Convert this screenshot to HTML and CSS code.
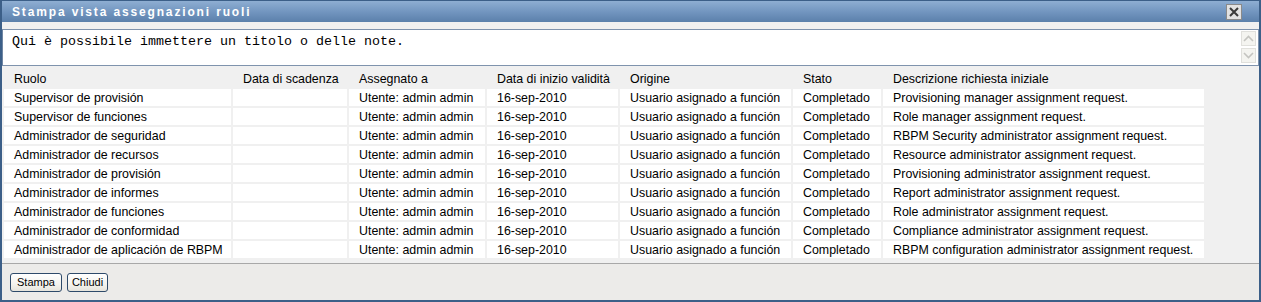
FILE: index.html
```html
<!DOCTYPE html>
<html lang="it">
<head>
<meta charset="utf-8">
<title>Stampa vista assegnazioni ruoli</title>
<link rel="stylesheet" href="styles.css">
</head>
<body>
<div class="dialog">
  <div class="titlebar">
    <span class="title">Stampa vista assegnazioni ruoli</span>
    <button class="close" type="button" aria-label="Chiudi">
      <svg width="10" height="10" viewBox="0 0 10 10"><path d="M1 1 L9 9 M9 1 L1 9" stroke="#3a3a3a" stroke-width="2" fill="none"/></svg>
    </button>
  </div>
  <div class="content">
    <div class="notes">
      <div class="notes-text">Qui è possibile immettere un titolo o delle note.</div>
      <div class="scrollbar">
        <span class="sbtn"><svg width="11" height="7" viewBox="0 0 11 7"><path d="M1 6 L5.5 1.5 L10 6" stroke="#c4c4c0" stroke-width="1.6" fill="none"/></svg></span>
        <span class="sbtn"><svg width="11" height="7" viewBox="0 0 11 7"><path d="M1 1 L5.5 5.5 L10 1" stroke="#c4c4c0" stroke-width="1.6" fill="none"/></svg></span>
      </div>
    </div>
    <table class="grid">
      <colgroup>
        <col class="c1"><col class="c2"><col class="c3"><col class="c4"><col class="c5"><col class="c6"><col class="c7">
      </colgroup>
      <thead>
        <tr><th>Ruolo</th><th>Data di scadenza</th><th>Assegnato a</th><th>Data di inizio validità</th><th>Origine</th><th>Stato</th><th>Descrizione richiesta iniziale</th></tr>
      </thead>
      <tbody>
        <tr><td>Supervisor de provisión</td><td></td><td>Utente: admin admin</td><td>16-sep-2010</td><td>Usuario asignado a función</td><td>Completado</td><td>Provisioning manager assignment request.</td></tr>
        <tr><td>Supervisor de funciones</td><td></td><td>Utente: admin admin</td><td>16-sep-2010</td><td>Usuario asignado a función</td><td>Completado</td><td>Role manager assignment request.</td></tr>
        <tr><td>Administrador de seguridad</td><td></td><td>Utente: admin admin</td><td>16-sep-2010</td><td>Usuario asignado a función</td><td>Completado</td><td>RBPM Security administrator assignment request.</td></tr>
        <tr><td>Administrador de recursos</td><td></td><td>Utente: admin admin</td><td>16-sep-2010</td><td>Usuario asignado a función</td><td>Completado</td><td>Resource administrator assignment request.</td></tr>
        <tr><td>Administrador de provisión</td><td></td><td>Utente: admin admin</td><td>16-sep-2010</td><td>Usuario asignado a función</td><td>Completado</td><td>Provisioning administrator assignment request.</td></tr>
        <tr><td>Administrador de informes</td><td></td><td>Utente: admin admin</td><td>16-sep-2010</td><td>Usuario asignado a función</td><td>Completado</td><td>Report administrator assignment request.</td></tr>
        <tr><td>Administrador de funciones</td><td></td><td>Utente: admin admin</td><td>16-sep-2010</td><td>Usuario asignado a función</td><td>Completado</td><td>Role administrator assignment request.</td></tr>
        <tr><td>Administrador de conformidad</td><td></td><td>Utente: admin admin</td><td>16-sep-2010</td><td>Usuario asignado a función</td><td>Completado</td><td>Compliance administrator assignment request.</td></tr>
        <tr><td>Administrador de aplicación de RBPM</td><td></td><td>Utente: admin admin</td><td>16-sep-2010</td><td>Usuario asignado a función</td><td>Completado</td><td>RBPM configuration administrator assignment request.</td></tr>
      </tbody>
    </table>
  </div>
  <div class="footer">
    <button class="btn btn-print" type="button">Stampa</button>
    <button class="btn btn-close" type="button">Chiudi</button>
  </div>
</div>
</body>
</html>
```
FILE: styles.css
```css
* { box-sizing: border-box; }
html, body { margin: 0; padding: 0; }
body {
  width: 1261px;
  height: 302px;
  overflow: hidden;
  font-family: "Liberation Sans", Arial, sans-serif;
  background: #ffffff;
}
.dialog {
  width: 1261px;
  height: 302px;
  border: 2px solid #3c5f88;
  border-top-width: 1px;
  background: #f0f0f0;
  display: flex;
  flex-direction: column;
}
.titlebar {
  height: 21px;
  flex: none;
  display: flex;
  align-items: center;
  justify-content: space-between;
  padding: 0 17px 0 10px;
  background: linear-gradient(to bottom, #8eaed2 0%, #7396c0 50%, #5b80ab 100%);
}
.title {
  color: #ffffff;
  font-weight: bold;
  font-size: 12px;
  letter-spacing: 1.85px;
  line-height: 14px;
}
.close {
  width: 16px;
  height: 16px;
  margin: 1px 0 0 0;
  padding: 0;
  border: 1px solid #8a8a8a;
  background: #e2e2e2;
  display: flex;
  align-items: center;
  justify-content: center;
}
.content {
  padding-top: 7px;
  padding-bottom: 3px;
  border-bottom: 1px solid #a8a8a8;
  flex: none;
}
.notes {
  height: 37px;
  background: #ffffff;
  border: 1px solid #7f93ad;
  border-left-color: #6f86a3;
  display: flex;
  justify-content: space-between;
}
.notes-text {
  font-family: "Liberation Mono", "Courier New", monospace;
  font-size: 13.33px;
  color: #000000;
  padding: 4px 0 0 9px;
  line-height: 15px;
}
.scrollbar {
  width: 17px;
  display: flex;
  flex-direction: column;
  gap: 2px;
  padding: 1px 1px 0 0;
}
.sbtn {
  width: 15px;
  height: 15px;
  border: 1px solid #e0e0dc;
  background: #f4f4f0;
  display: flex;
  align-items: center;
  justify-content: center;
}
.grid {
  table-layout: fixed;
  border-collapse: separate;
  border-spacing: 2px;
  margin: 2px 0 0 0;
  font-size: 12.4px;
  color: #000000;
}
.grid col.c1 { width: 227px; }
.grid col.c2 { width: 114px; }
.grid col.c3 { width: 136px; }
.grid col.c4 { width: 131px; }
.grid col.c5 { width: 171px; }
.grid col.c6 { width: 88px; }
.grid col.c7 { width: 321px; }
.grid th, .grid td {
  height: 17px;
  padding: 1px 0 0 10px;
  text-align: left;
  white-space: nowrap;
  overflow: hidden;
  line-height: 15px;
  vertical-align: middle;
}
.grid th {
  font-weight: normal;
  background: transparent;
}
.grid td {
  background: #ffffff;
}
.footer {
  flex: 1;
  background: #ecebe9;
  display: flex;
  align-items: flex-start;
  gap: 5px;
  padding: 9px 0 0 8px;
}
.btn {
  height: 19px;
  padding: 0;
  font-family: "Liberation Sans", Arial, sans-serif;
  font-size: 11px;
  color: #000000;
  border: 1px solid #2e4a6a;
  border-radius: 3px;
  background: linear-gradient(to bottom, #ffffff 0%, #f4f3ee 60%, #e6e4dc 100%);
  line-height: 15px;
  text-align: center;
}
.btn-print { width: 52px; }
.btn-close { width: 41px; }
```
